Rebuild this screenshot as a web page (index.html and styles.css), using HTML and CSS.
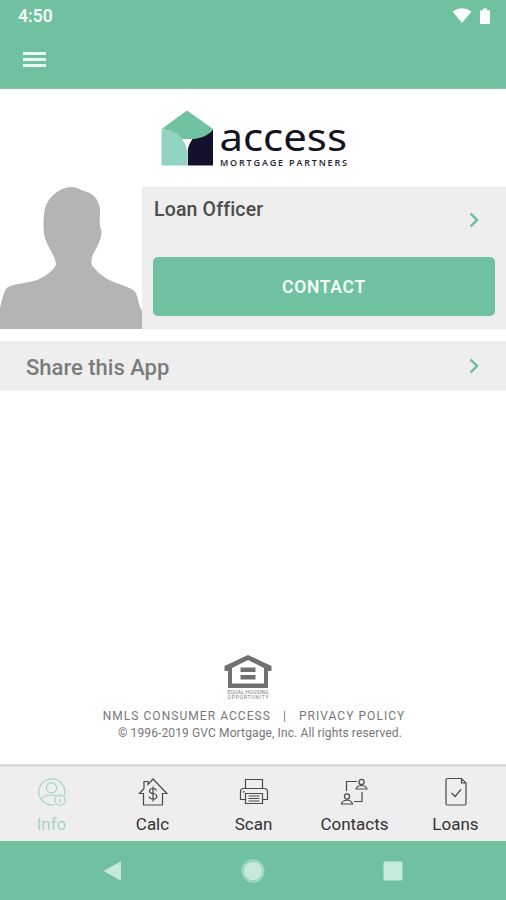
FILE: index.html
```html
<!DOCTYPE html>
<html lang="en">
<head>
  <meta charset="UTF-8" />
  <meta name="viewport" content="width=device-width, initial-scale=1.0" />
  <title>Access Mortgage Partners</title>
  <link rel="stylesheet" href="styles.css">
</head>
<body>
  <div class="app">

    <header class="header">
      <div class="status-bar">
        <span class="time">4:50</span>
        <div class="status-icons">
          <svg width="20" height="16" viewBox="0 0 20 16"><path d="M0.5 3.6Q10 -3 19.5 3.6L10 15z" fill="#fff"/></svg>
          <svg width="10" height="16" viewBox="0 0 10 16"><path d="M3 0.5h4v1.700h2q1 0 1 1V15q0 1-1 1H1q-1 0-1-1V3.200q0-1 1-1h2z" fill="#fff"/></svg>
        </div>
      </div>
      <button class="menu-btn" aria-label="Menu"><span></span><span></span><span></span></button>
    </header>

    <main class="content">
      <div class="logo">
        <svg width="190" height="62" viewBox="0 0 190 62">
          <path d="M0.500 20L26 1.500L52 20C48 26 42 29.500 33 30H20C15 24 9 21 0.500 20z" fill="#6fc3a0"/>
          <path d="M52 20.500V56.500H26.800V41C27.500 37 29 33.500 31.500 30C40 29.500 48 26 52 20.500z" fill="#14122b"/>
          <path d="M0.500 20.500C10 20.500 17 24 21 30C24 34 25.500 38 26 42V56.500H0.500z" fill="#93d3c2"/>
          <text class="logo-name" x="58.500" y="42" textLength="127.500" lengthAdjust="spacingAndGlyphs">access</text>
          <text class="logo-sub" x="59" y="56.500" textLength="127">MORTGAGE PARTNERS</text>
        </svg>
      </div>

      <section class="officer">
        <svg class="avatar" width="142" height="142" viewBox="0 0 142 141" preserveAspectRatio="none">
          <path d="M0 141V120C2 112 4 103 7 100C12 96 30 95 38 92C47 88 54 82 56 77C56 70 48 60 45 51C43 44 43 30 45 21C49 8 61 0 72 0C78 0 80 3 84 4C93 6 99 12 100 23C100 31 99 37 101 42C103 49 98 58 94 65C91 70 91 75 92 78C96 83 103 90 111 93C120 97 130 99 135 104C139 110 138 117 142 123V141z" fill="#b4b4b4"/>
        </svg>
        <div class="officer-info">
          <div class="officer-row">
            <h2>Loan Officer</h2>
            <svg class="chevron" width="10" height="16" viewBox="0 0 10 16"><path d="M1.500 1.500L8 8L1.500 14.500"/></svg>
          </div>
          <button class="contact-btn">CONTACT</button>
        </div>
      </section>

      <section class="share">
        <h2>Share this App</h2>
        <svg class="chevron" width="10" height="16" viewBox="0 0 10 16"><path d="M1.500 1.500L8 8L1.500 14.500"/></svg>
      </section>

      <footer class="legal">
        <svg width="50" height="46" viewBox="0 0 50 46">
          <path d="M25 1L48.500 12V17H45V34H5V17H1.500V12zM25 6L9 14V29.500H41V14z" fill="#707070" fill-rule="evenodd"/>
          <path d="M17.500 13.500h15v4.500h-15zM17.500 21h15v4.500h-15z" fill="#707070"/>
          <text class="housing" x="4.500" y="39.500" textLength="41">EQUAL HOUSING</text>
          <text class="housing" x="4.500" y="44.500" textLength="41">OPPORTUNITY</text>
        </svg>
        <p class="links"><a>NMLS CONSUMER ACCESS</a><span>|</span><a>PRIVACY POLICY</a></p>
        <p class="copyright">© 1996-2019 GVC Mortgage, Inc. All rights reserved.</p>
      </footer>
    </main>

    <nav class="tabs">
      <a class="tab active">
        <svg width="30" height="30" viewBox="0 0 30 30">
          <path d="M18 27.500A13 13 0 1 1 27.500 18"/>
          <circle cx="14.500" cy="11" r="5.200"/>
          <path d="M4 22.500C6 19 10.500 18 14.500 18Q17 18 19 19"/>
          <circle cx="23" cy="23" r="5.200"/>
          <path d="M23 22v4M23 19.800v1.200"/>
        </svg>
        <span>Info</span>
      </a>
      <a class="tab">
        <svg width="30" height="30" viewBox="0 0 30 30">
          <path d="M5.500 16.500H1.500L6 11.500V4.500H10V7.500L15 2L29 16.500H24.500V28H5.500z"/>
          <path d="M18.500 13.500Q18 11.500 15 11.500Q11.500 11.500 11.500 14Q11.500 16 15 16.500Q18.800 17 18.800 19.500Q18.800 22 15 22Q11.500 22 11 19.500M15 9.500V24.500"/>
        </svg>
        <span>Calc</span>
      </a>
      <a class="tab">
        <svg width="30" height="30" viewBox="0 0 30 30">
          <path d="M6.500 11.500V2.500H23.500V11.500M6.500 22.500H1.500V14.500Q1.500 11.500 4.500 11.500H25.500Q28.500 11.500 28.500 14.500V22.500H23.500M3.800 14.800h2"/>
          <path d="M6.500 16.500H23.500V26.500H6.500zM9.500 19h11M9.500 21.500h11M9.500 24h11"/>
        </svg>
        <span>Scan</span>
      </a>
      <a class="tab">
        <svg width="30" height="30" viewBox="0 0 30 30">
          <path d="M6.500 14V4.500H17M22 15V24.500H14"/>
          <circle cx="21.500" cy="5" r="2.600"/>
          <path d="M16 12Q16.500 9 21.500 8.500Q26.500 9 27 12z"/>
          <circle cx="7" cy="19.500" r="2.600"/>
          <path d="M1.500 27Q2 23.500 7 23Q12 23.500 12.500 27z"/>
        </svg>
        <span>Contacts</span>
      </a>
      <a class="tab">
        <svg width="30" height="30" viewBox="0 0 30 30">
          <path d="M6.500 1.500H20.500L25 6V26.500Q25 28 23.500 28H6.500Q5 28 5 26.500V3Q5 1.500 6.500 1.500zM20.500 1.500V6H25"/>
          <path d="M10.500 16L14 19.500L20 12.500"/>
        </svg>
        <span>Loans</span>
      </a>
    </nav>

    <div class="android-nav">
      <svg width="20" height="22" viewBox="0 0 20 22"><path d="M0.500 11L18 1.200V20.800z"/></svg>
      <svg width="24" height="24" viewBox="0 0 24 24"><circle cx="12" cy="12" r="9.500"/><circle class="ring" cx="12" cy="12" r="10.800"/></svg>
      <svg width="20" height="20" viewBox="0 0 20 20"><rect x="0.500" y="0.500" width="19" height="19" rx="1.500"/></svg>
    </div>

  </div>
</body>
</html>
```

FILE: styles.css
```css
* {
  margin: 0;
  padding: 0;
  box-sizing: border-box;
}

body {
  font-family: Roboto, "Liberation Sans", sans-serif;
  background: #fff;
}

svg {
  display: block;
  flex-shrink: 0;
}

.app {
  height: 900px;
  display: flex;
  flex-direction: column;
}

/* Header */
.header {
  height: 89px;
  background: #70c19f;
  border-bottom: 1px solid #83c6aa;
}

.status-bar {
  height: 32px;
  padding: 0 16px 0 18px;
  display: flex;
  justify-content: space-between;
  align-items: center;
}

.time {
  color: #f4fff9;
  font-size: 17.5px;
  font-weight: 600;
}

.status-icons {
  display: flex;
  gap: 8px;
  padding-bottom: 1px;
}

.menu-btn {
  display: flex;
  flex-direction: column;
  gap: 3px;
  width: 23px;
  margin: 20px 0 0 23px;
  border: none;
  background: none;
}

.menu-btn span {
  height: 3px;
  background: #eafff5;
}

/* Content */
.content {
  flex: 1;
  display: flex;
  flex-direction: column;
}

.logo {
  height: 98px;
  padding: 20px 0 0 161px;
}

.logo-name {
  font-family: "Noto Sans", sans-serif;
  font-size: 39px;
  fill: #141322;
}

.logo-sub {
  font-family: "Open Sans", sans-serif;
  font-size: 9px;
  font-weight: 600;
  fill: #242330;
}

.officer {
  height: 142px;
  display: flex;
}

.officer-info {
  flex: 1;
  padding: 0 11px;
  background: #eee;
}

.officer-row {
  height: 70px;
  padding: 12px 16px 0 1px;
  display: flex;
  justify-content: space-between;
}

.officer-row h2 {
  font-size: 19.5px;
  line-height: 22px;
  font-weight: 500;
  letter-spacing: 0.15px;
  color: #4c4c4c;
}

.officer-row .chevron {
  margin-top: 13px;
}

.chevron {
  fill: none;
  stroke: #65bd98;
  stroke-width: 2.4;
}

.contact-btn {
  display: block;
  width: 342px;
  height: 59px;
  border: none;
  border-radius: 5px;
  background: #70c19f;
  color: #f4fff9;
  font-family: inherit;
  font-size: 17.5px;
  font-weight: 600;
  letter-spacing: 0.7px;
}

.share {
  height: 50px;
  margin-top: 12px;
  padding: 0 27px 0 26px;
  display: flex;
  justify-content: space-between;
  align-items: center;
  background: #eee;
}

.share h2 {
  font-size: 22px;
  font-weight: 500;
  color: #7b7b7b;
  padding-top: 2px;
}

.legal {
  margin-top: auto;
  padding-bottom: 22px;
  display: flex;
  flex-direction: column;
  align-items: center;
  color: #777;
}

.legal svg {
  margin-right: 11px;
}

.housing {
  font-size: 5px;
  fill: #777;
}

.links {
  display: flex;
  gap: 12px;
  margin: 8px 0 0 2px;
  font-size: 12px;
  line-height: 16px;
  letter-spacing: 1.05px;
}

.copyright {
  margin-left: 14px;
  font-size: 12px;
  line-height: 18px;
  letter-spacing: 0.12px;
}

/* Tabs */
.tabs {
  height: 77px;
  padding-left: 1px;
  display: grid;
  grid-template-columns: repeat(5, 1fr);
  background: #eee;
  border-top: 3px solid #dcdcdc;
}

.tab {
  display: flex;
  flex-direction: column;
  align-items: center;
  padding-top: 10px;
  color: #333;
  font-size: 17px;
}

.tab svg {
  fill: none;
  stroke: #4a4a4a;
  stroke-width: 1.2;
}

.tab span {
  line-height: 20px;
  margin-top: 7px;
}

.active {
  color: #a3d7c5;
}

.active svg {
  stroke: #a3d7c5;
}

/* Android navigation */
.android-nav {
  height: 59px;
  padding: 0 103px;
  display: flex;
  justify-content: space-between;
  align-items: center;
  background: #70c19f;
}

.android-nav svg {
  fill: #c7e9d8;
}

.android-nav .ring {
  fill: none;
  stroke: #a9dcc5;
  stroke-width: 1.4;
}
```
